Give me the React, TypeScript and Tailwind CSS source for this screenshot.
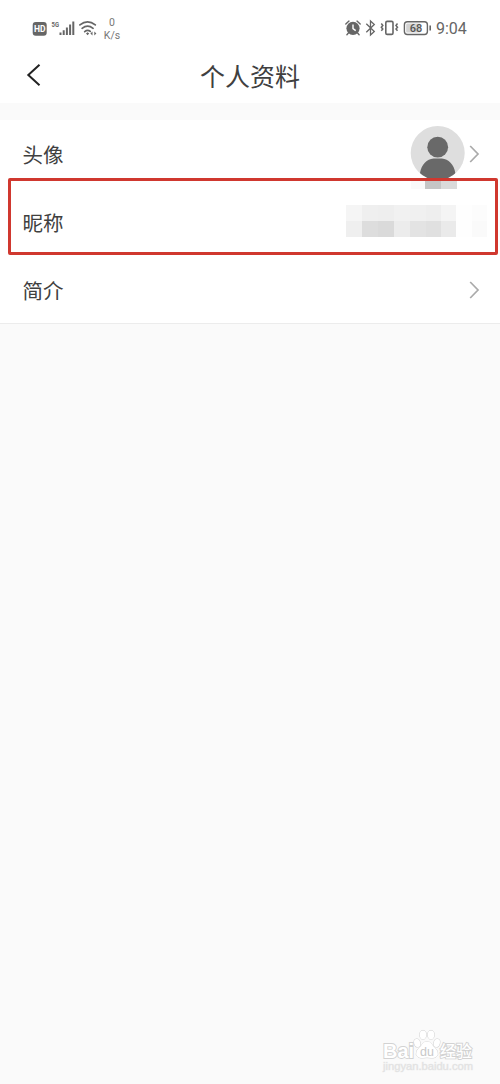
import React from 'react';

interface IProfileRowProps {
    label: string;
    className?: string;
    children?: React.ReactNode;
}

const Chevron: React.FC = () => (
    <svg className="-mt-[1px]" width="12" height="18" viewBox="0 0 12 18" fill="none" stroke="#aaaaaa" strokeWidth="1.7">
        <path d="M1.2 1 9 9 1.2 17"/>
    </svg>
);

const SignalIcons: React.FC = () => (
    <svg width="66" height="20" viewBox="0 0 66 20" fill="#666666">
        <rect x="1.7" y="4" width="14" height="13.8" rx="3"/>
        <text x="8.7" y="14" fontSize="8.5" fontWeight="700" textAnchor="middle" fill="#ffffff">HD</text>
        <text x="20.5" y="9.2" fontSize="8" fontWeight="700" textLength="7.5" lengthAdjust="spacingAndGlyphs">5G</text>
        <path d="M28.5 14.5h2V17h-2zM31.7 12.3h2V17h-2zM34.9 9.5h2V17h-2zM38.1 6.5h2V17h-2zM41.3 3.5h2V17h-2z"/>
        <g fill="none" stroke="#666666" strokeWidth="1.7" strokeLinecap="round">
            <path d="M48.9 6.9q7.7-6.2 15.4 0"/>
            <path d="M51.1 10.3q5.5-4.3 11 0"/>
            <path d="M53.7 13.6q2.9-2.4 5.6-.2"/>
        </g>
        <path d="m55 15.5 1.6-1.3 1.6 1.3-1.6 1.8zM59.4 15.5l2.1-1.9v3.8zM65.4 15.5l-2.1-1.9v3.8z"/>
    </svg>
);

const DeviceIcons: React.FC = () => (
    <svg width="92" height="20" viewBox="0 0 92 20" fill="none" stroke="#666666" strokeWidth="1.4">
        <circle cx="9" cy="10.3" r="6.6" fill="#666666" stroke="none"/>
        <path d="M1.8 6 5 3.1M13 3.1l3.2 2.9M4.4 15.1l-1.5 1.6M13.6 15.1l1.5 1.6" strokeLinecap="round"/>
        <path d="M9 6.6v4l2.7 2" stroke="#ffffff"/>
        <path d="m22.3 5.8 8 7.7-3.8 3.5V3l3.8 3.4-8 7.8" strokeWidth="1.3"/>
        <rect x="41.8" y="3.4" width="7.2" height="13" rx="1.4" strokeWidth="1.6"/>
        <path d="M37.3 5.6l1.5 1.8-1.5 1.8 1.5 1.8-1.5 1.8M53.5 5.6L52 7.4l1.5 1.8L52 11l1.5 1.8" strokeWidth="1.5"/>
        <rect x="60.4" y="3.7" width="23" height="12.8" rx="3" strokeWidth="1.4"/>
        <path d="M63.4 5.6h12.5v9H63.4q-1.2 0-1.2-1.2V6.8q0-1.2 1.2-1.2z" fill="#d2d2d2" stroke="none"/>
        <path d="M86.2 7.6v5" strokeWidth="1.6"/>
        <text x="71.9" y="14" fontSize="11" fontWeight="500" textAnchor="middle" fill="#555555" stroke="none">68</text>
    </svg>
);

const StatusBar: React.FC = () => (
    <div className="flex h-[50px] items-start justify-between pl-[31px] pr-[33px] pt-[18px] font-['Roboto',sans-serif] text-[#666666]">
        <div className="flex items-start">
            <SignalIcons/>
            <div className="-mt-[2px] ml-[6px] w-[18px] text-center text-[10.5px] leading-[13px] text-[#777777]">
                <div>0</div>
                <div>K/s</div>
            </div>
        </div>
        <div className="flex items-start">
            <DeviceIcons/>
            <span className="-mt-px w-[31px] whitespace-nowrap text-[16px] leading-[24px]">9:04</span>
        </div>
    </div>
);

const Avatar: React.FC = () => (
    <svg className="-mt-[3px]" width="56" height="56" viewBox="0 0 56 56">
        <clipPath id="avatar">
            <circle cx="27.7" cy="28" r="27"/>
        </clipPath>
        <g clipPath="url(#avatar)">
            <rect width="56" height="56" fill="#dedede"/>
            <circle cx="27.7" cy="22.2" r="10.4" fill="#696969"/>
            <path d="M9.9 57v-6.5C9.9 42 15 35.5 21 33.9q1-.3 2.5-.3h8.4q1.5 0 2.5.3c6 1.6 11.1 8.1 11.1 16.6V57z" fill="#696969"/>
        </g>
    </svg>
);

const HiddenNickname: React.FC = () => (
    <div className="-mt-[2px] grid h-[32px] grid-cols-[16px_16px_16px_16px_16px_15px_15px_16px_15px] grid-rows-2">
        <div className="bg-[#f5f5f5]"/>
        <div className="bg-[#efefef]"/>
        <div className="bg-[#eeeeee]"/>
        <div className="bg-[#f1f1f1]"/>
        <div className="bg-[#f0f0f0]"/>
        <div className="bg-[#eeeeee]"/>
        <div className="bg-[#f4f4f4]"/>
        <div className="bg-[#fefefe]"/>
        <div className="bg-[#fcfcfc]"/>
        <div className="bg-[#efefef]"/>
        <div className="bg-[#dddddd]"/>
        <div className="bg-[#dadada]"/>
        <div className="bg-[#ececec]"/>
        <div className="bg-[#e3e3e3]"/>
        <div className="bg-[#e0e0e0]"/>
        <div className="bg-[#eaeaea]"/>
        <div className="bg-[#fefefe]"/>
        <div className="bg-[#fafafa]"/>
    </div>
);

const ProfileRow: React.FC<IProfileRowProps> = ({label, className, children}) => (
    <div className={`flex h-[68px] items-center justify-between pl-[22.5px] text-[20.5px] text-[#404040] ${className ?? ''}`}>
        <span>{label}</span>
        {children}
    </div>
);

const Watermark: React.FC = () => (
    <svg width="96" height="46" viewBox="0 0 96 46" fill="#ffffff" stroke="#d2d2d2" strokeWidth="1" paintOrder="stroke">
        <text x="3" y="28.5" fontSize="20" fontWeight="700" textLength="31" lengthAdjust="spacingAndGlyphs" strokeWidth="1.8">Bai</text>
        <text x="60" y="27.5" fontSize="16" fontWeight="500" textLength="32" strokeWidth="1.8" fontFamily="'Noto Sans CJK SC', sans-serif">经验</text>
        <ellipse cx="37.2" cy="14" rx="3" ry="4.1" transform="rotate(-15 37.2 14)"/>
        <ellipse cx="43" cy="5.8" rx="3.2" ry="4.4"/>
        <ellipse cx="51" cy="5.8" rx="3.2" ry="4.4"/>
        <ellipse cx="56.8" cy="14" rx="3" ry="4.1" transform="rotate(15 56.8 14)"/>
        <path d="M47 12.5q3.7 0 6 4.4 5.3 4.5 4.8 8.3-1 4-6.2 3.8-4.6-.8-9.2 0-5.2.2-6.2-3.8-.5-3.8 4.8-8.3 2.3-4.4 6-4.4z"/>
        <text x="47" y="26.5" fontSize="12.5" textAnchor="middle" strokeWidth="0" fill="#c8c8c8">du</text>
        <text x="3" y="41" fontSize="10.5" textLength="90" lengthAdjust="spacingAndGlyphs" fill="#e2e2e2" stroke="#ececec" strokeWidth=".6">jingyan.baidu.com</text>
    </svg>
);

export default function App() {
    return (
        <div className="relative h-[1084px] w-[500px] overflow-hidden bg-[#fafafa] font-['Noto_Sans_CJK_SC',sans-serif]">
            <header className="h-[103px] bg-white">
                <StatusBar/>
                <div className="grid h-[50px] grid-cols-[68px_1fr_68px] items-center">
                    <svg className="ml-[26px]" width="16" height="24" viewBox="0 0 16 24" fill="none" stroke="#222222" strokeWidth="2">
                        <path d="M13.5 1.7 2.3 12l11.2 10.3"/>
                    </svg>
                    <h1 className="text-center text-[25px] leading-none text-[#404040]">个人资料</h1>
                </div>
            </header>
            <main className="mt-[17px] h-[204px] border-b border-[#ececec] bg-white">
                <ProfileRow label="头像" className="pr-[19px]">
                    <div className="flex items-center gap-[3px]">
                        <Avatar/>
                        <Chevron/>
                    </div>
                </ProfileRow>
                <ProfileRow label="昵称" className="pr-[13px]">
                    <HiddenNickname/>
                </ProfileRow>
                <ProfileRow label="简介" className="pr-[19px]">
                    <Chevron/>
                </ProfileRow>
            </main>
            {/* highlight frame and the blurred strip just under the avatar */}
            <div className="absolute left-[411px] top-[181px] flex h-[8px] w-[46px]">
                <div className="w-[14px] bg-[#fafafa]"/>
                <div className="w-[16px] bg-[#c5c5c5]"/>
                <div className="w-[16px] bg-[#dadada]"/>
            </div>
            <div className="absolute left-[8px] top-[178px] h-[77px] w-[490px] rounded-[2px] border-[3px] border-[#d0382f]"/>
            <div className="absolute left-[380px] top-[1029px] font-['Liberation_Sans',sans-serif]">
                <Watermark/>
            </div>
        </div>
    );
}
